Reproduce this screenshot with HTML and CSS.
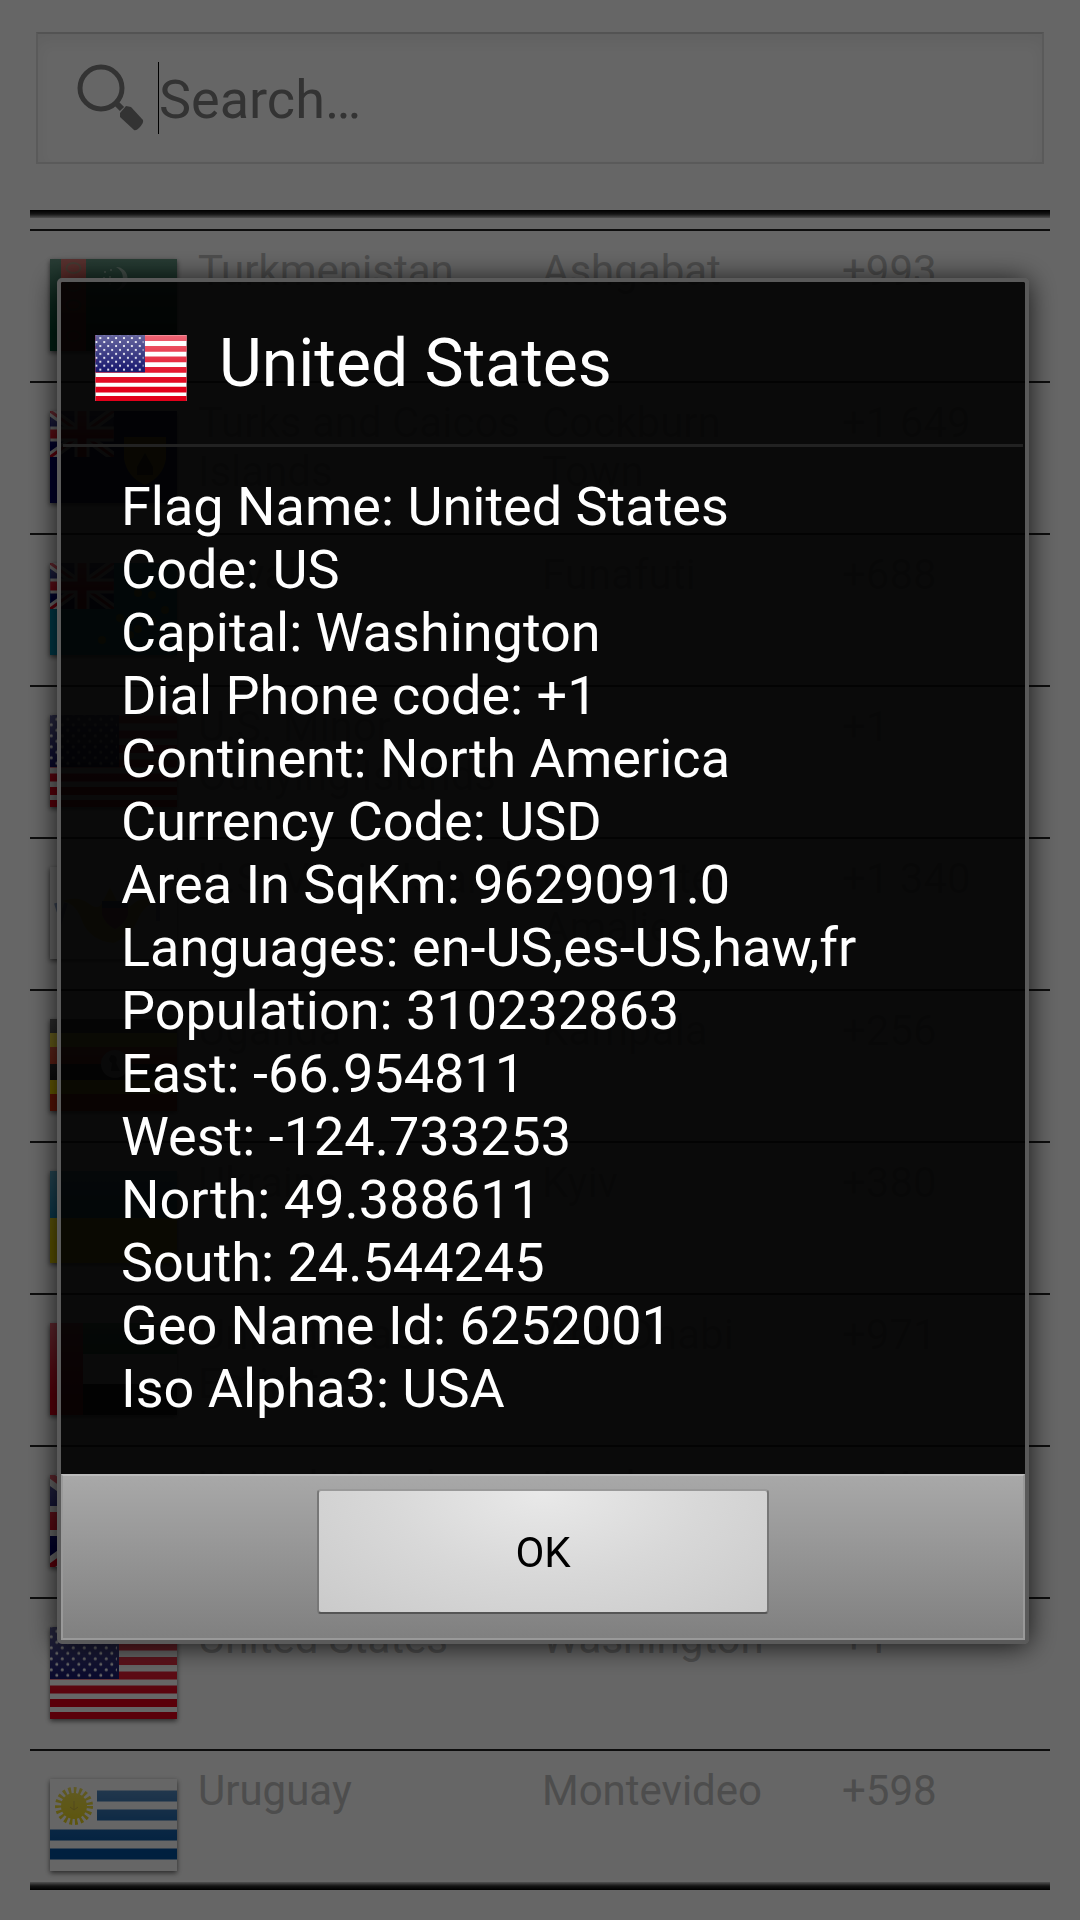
FILE: index.html
```html
<!DOCTYPE html>
<html lang="en">
<head>
    <title>World Flags</title>
    <meta charset="utf-8" />
    <meta name="viewport" content="width=device-width, initial-scale=1">
    <link rel="stylesheet" href="styles.css">
</head>
<body>
    <!-- shared flag drawings -->
    <svg class="defs" width="0" height="0" aria-hidden="true">
        <defs>
            <linearGradient id="gloss" x1="0" y1="0" x2="0" y2="1">
                <stop offset="0" stop-color="#fff" stop-opacity=".4"/>
                <stop offset=".5" stop-color="#fff" stop-opacity=".12"/>
                <stop offset=".8" stop-color="#fff" stop-opacity="0"/>
            </linearGradient>
            <pattern id="stars" x="4" y="1.5" width="11" height="11" patternUnits="userSpaceOnUse">
                <circle cx="2.8" cy="2.8" r="1.5" fill="#fff"/>
                <circle cx="8.3" cy="8.3" r="1.5" fill="#fff"/>
            </pattern>
            <symbol id="us" viewBox="0 0 127 92">
                <rect width="127" height="92" fill="#fff"/>
                <path d="M0 4.5h127M0 19.5h127M0 34h127M0 48.5h127M0 62.5h127M0 76h127M0 89h127" stroke="#e2001a" stroke-width="8"/>
                <rect width="69" height="52" fill="#00005f"/>
                <rect width="67" height="51" fill="url(#stars)"/>
                <rect width="127" height="92" fill="url(#gloss)"/>
            </symbol>
            <symbol id="gb" viewBox="0 0 127 92">
                <rect width="127" height="92" fill="#00006b"/>
                <path d="M0 0L127 92M127 0L0 92" stroke="#fff" stroke-width="18"/>
                <path d="M0 0L127 92M127 0L0 92" stroke="#e2001a" stroke-width="6"/>
                <path d="M63.500 0v92M0 46h127" stroke="#fff" stroke-width="30"/>
                <path d="M63.500 0v92M0 46h127" stroke="#e2001a" stroke-width="18"/>
                <rect width="127" height="92" fill="url(#gloss)"/>
            </symbol>
            <symbol id="tm" viewBox="0 0 127 92">
                <rect width="127" height="92" fill="#004f30"/>
                <rect x="11" width="25" height="92" fill="#c2261d"/>
                <g fill="none" stroke="#7a5030" stroke-width="2">
                    <ellipse cx="23.500" cy="9" rx="7" ry="5"/><ellipse cx="23.500" cy="27" rx="7" ry="5"/>
                    <ellipse cx="23.500" cy="46" rx="7" ry="5"/><ellipse cx="23.500" cy="77" rx="7" ry="5"/>
                </g>
                <path d="M66 8a11 11 0 0 1 0 23a13 13 0 0 0 0-23z" fill="#7fa894"/>
                <g fill="#7fa894"><circle cx="55" cy="13" r="1"/><circle cx="61" cy="11" r="1"/><circle cx="54" cy="19" r="1"/><circle cx="60" cy="18" r="1"/><circle cx="60" cy="25" r="1"/></g>
                <rect width="127" height="92" fill="url(#gloss)"/>
            </symbol>
            <symbol id="tc" viewBox="0 0 127 92">
                <rect width="127" height="92" fill="#00006b"/>
                <use href="#gb" width="64" height="46"/>
                <path d="M74 26h42v22q-3 18-21 26q-18-8-21-26z" fill="#c8a50c"/>
                <path d="M95 42l8 14v8h-16v-8z" fill="#3a2d10"/>
            </symbol>
            <symbol id="tv" viewBox="0 0 127 92">
                <rect width="127" height="92" fill="#008fb3"/>
                <use href="#gb" width="64" height="46"/>
                <g fill="#b5b420"><circle cx="52" cy="77" r="4"/><circle cx="70" cy="55" r="4"/><circle cx="80" cy="72" r="4"/><circle cx="88" cy="66" r="4"/><circle cx="88" cy="30" r="4"/><circle cx="102" cy="58" r="4"/><circle cx="102" cy="32" r="4"/><circle cx="115" cy="47" r="4"/></g>
            </symbol>
            <symbol id="vi" viewBox="0 0 127 92">
                <rect width="127" height="92" fill="#fff"/>
                <path d="M12 34q16-6 26 2q10 8 14 0l8-16l8 16q8 8 16 0q10-8 24-2q-14 4-20 18q-6 16-24 24q-24-2-32-22q-6-18-20-20z" fill="#f2dc70"/>
                <path d="M52 34h26v14q-4 10-13 14q-9-4-13-14z" fill="#d2707a"/>
                <path d="M52 34h26v7h-26z" fill="#4a6a9c"/>
                <path d="M6 36l5 16l5-16M108 32v22" fill="none" stroke="#8fa5cc" stroke-width="4"/>
            </symbol>
            <symbol id="ug" viewBox="0 0 127 92">
                <rect width="127" height="92" fill="#111"/>
                <path d="M0 14h127v14h-127zM0 61h127v14h-127z" fill="#ffe000"/>
                <path d="M0 28h127v17h-127zM0 75h127v17h-127z" fill="#e03010"/>
                <circle cx="65" cy="45" r="14" fill="#ccc"/>
                <path d="M61 36q8 0 5 8l4 8h-9l1-8q-5-2-1-8z" fill="#444"/>
                <rect width="127" height="92" fill="url(#gloss)"/>
            </symbol>
            <symbol id="ua" viewBox="0 0 127 92">
                <rect width="127" height="92" fill="#e8d200"/>
                <rect width="127" height="47" fill="#0080b5"/>
                <rect width="127" height="92" fill="url(#gloss)"/>
            </symbol>
            <symbol id="ae" viewBox="0 0 127 92">
                <rect width="127" height="92" fill="#fff"/>
                <rect width="127" height="31" fill="#007a3d"/>
                <rect y="61" width="127" height="31" fill="#000"/>
                <rect width="33" height="92" fill="#e2001a"/>
                <rect width="127" height="92" fill="url(#gloss)"/>
            </symbol>
            <symbol id="uy" viewBox="0 0 127 92">
                <rect width="127" height="92" fill="#fff"/>
                <path d="M47 17h80M47 36h80M0 56h127M0 75h127" stroke="#00509f" stroke-width="11"/>
                <circle cx="24" cy="27" r="13" fill="#e8d000"/>
                <circle cx="24" cy="27" r="15" fill="none" stroke="#e8d000" stroke-width="8" stroke-dasharray="2.500 2.500"/>
                <path d="M24 22v8M20 28l4 3 4-3" fill="none" stroke="#c0a010"/>
                <rect width="127" height="92" fill="url(#gloss)"/>
            </symbol>
        </defs>
    </svg>

    <div class="page">
        <label class="search">
            <svg class="search-icon" viewBox="0 0 70 70" aria-hidden="true">
                <circle cx="25" cy="25" r="21" fill="none" stroke="#808080" stroke-width="5"/>
                <path d="M40 40l6 6" stroke="#808080" stroke-width="6"/>
                <path d="M44 50l6-7 5 1 12 13q1 3-4 8q-3 3-5 2l-14-13z" fill="#808080"/>
            </svg>
            <span class="caret"></span>
            <input type="text" placeholder="Search…" aria-label="Search">
        </label>

        <div class="shade shade-top"></div>
        <div class="list">
            <table class="countries">
                <colgroup><col class="c-flag"><col class="c-name"><col class="c-capital"><col></colgroup>
                <tr><td><svg class="flag"><use href="#tm"/></svg></td><td>Turkmenistan</td><td>Ashgabat</td><td>+993</td></tr>
                <tr><td><svg class="flag"><use href="#tc"/></svg></td><td>Turks and Caicos Islands</td><td>Cockburn Town</td><td>+1 649</td></tr>
                <tr><td><svg class="flag"><use href="#tv"/></svg></td><td>Tuvalu</td><td>Funafuti</td><td>+688</td></tr>
                <tr><td><svg class="flag"><use href="#us"/></svg></td><td>U.S. Minor Outlying Islands</td><td></td><td>+1</td></tr>
                <tr><td><svg class="flag"><use href="#vi"/></svg></td><td>U.S. Virgin Islands</td><td>Charlotte Amalie</td><td>+1 340</td></tr>
                <tr><td><svg class="flag"><use href="#ug"/></svg></td><td>Uganda</td><td>Kampala</td><td>+256</td></tr>
                <tr><td><svg class="flag"><use href="#ua"/></svg></td><td>Ukraine</td><td>Kyiv</td><td>+380</td></tr>
                <tr><td><svg class="flag"><use href="#ae"/></svg></td><td>United Arab Emirates</td><td>Abu Dhabi</td><td>+971</td></tr>
                <tr><td><svg class="flag"><use href="#gb"/></svg></td><td>United Kingdom</td><td>London</td><td>+44</td></tr>
                <tr><td><svg class="flag"><use href="#us"/></svg></td><td>United States</td><td>Washington</td><td>+1</td></tr>
                <tr><td><svg class="flag"><use href="#uy"/></svg></td><td>Uruguay</td><td>Montevideo</td><td>+598</td></tr>
            </table>
        </div>
        <div class="shade shade-bottom"></div>
    </div>

    <div class="scrim">
        <div class="dialog" role="dialog" aria-modal="true" aria-labelledby="dialogTitle">
            <div class="dialog-head">
                <svg class="flag-small"><use href="#us"/></svg>
                <h1 id="dialogTitle">United States</h1>
            </div>
            <div class="dialog-body">
                <p>Flag Name: United States</p>
                <p>Code: US</p>
                <p>Capital: Washington</p>
                <p>Dial Phone code: +1</p>
                <p>Continent: North America</p>
                <p>Currency Code: USD</p>
                <p>Area In SqKm: 9629091.0</p>
                <p>Languages: en-US,es-US,haw,fr</p>
                <p>Population: 310232863</p>
                <p>East: -66.954811</p>
                <p>West: -124.733253</p>
                <p>North: 49.388611</p>
                <p>South: 24.544245</p>
                <p>Geo Name Id: 6252001</p>
                <p>Iso Alpha3: USA</p>
            </div>
            <div class="dialog-foot">
                <button type="button">OK</button>
            </div>
        </div>
    </div>
</body>
</html>
```
FILE: styles.css
```css
* {box-sizing: border-box;}
body {
    margin: 0;
    background: #fff;
    font-family: Roboto, "Noto Sans", sans-serif;}
.defs {position: absolute;}

.page {
    display: flex;
    flex-direction: column;
    height: 100vh;
    padding: 32px 30px 30px;}

.search {
    display: flex;
    flex: none;
    align-items: center;
    height: 132px;
    margin: 0 6px 46px;
    padding: 0 38px;
    border: 2px solid #e2e2e2;
    border-top-color: #cfcfcf;
    box-shadow: inset 0 8px 16px rgba(0, 0, 0, .06);}
.search-icon {
    width: 70px;
    height: 70px;}
.caret {
    width: 1px;
    height: 72px;
    margin-left: 12px;
    background: #000;}
.search input {
    flex: 1;
    min-width: 0;
    padding: 4px 0 0;
    border: 0;
    outline: 0;
    background: none;
    color: #222;
    font: 54px/64px Roboto, sans-serif;}
.search input::placeholder {
    color: #808080;
    opacity: 1;}

.shade {
    flex: none;
    height: 8px;}
.shade-top {
    margin-bottom: 11px;
    background: linear-gradient(#000, #333 50%, #ccc);}
.shade-bottom {background: linear-gradient(#ccc, #333 50%, #000);}

.list {
    flex: 1;
    min-height: 0;
    overflow: hidden;}
.countries {
    width: 100%;
    table-layout: fixed;
    border-spacing: 0;
    color: #c0c0c0;
    font-size: 42px;
    line-height: 49px;}
.c-flag {width: 168px;}
.c-name {width: 344px;}
.c-capital {width: 300px;}
.countries td {
    height: 152px;
    padding: 15px 0 0;
    border-top: 2px solid #222;
    vertical-align: top;}
.countries td:nth-child(1) {padding: 28px 0 0 20px;}
.countries td:nth-child(3) {padding-right: 60px;}
.flag {
    display: block;
    width: 127px;
    height: 92px;
    box-shadow: 0 2px 5px rgba(0, 0, 0, .6);}

.scrim {
    position: fixed;
    inset: 0;
    display: flex;
    align-items: center;
    padding: 2px 51px 0 57px;
    background: rgba(0, 0, 0, .6);}
.dialog {
    flex: 1;
    border: 4px solid #5a5a5a;
    border-radius: 5px;
    background: rgba(2, 2, 2, .92);
    background-clip: padding-box;
    box-shadow: 0 2px 28px rgba(0, 0, 0, .8);
    color: #fff;}
.dialog-head {
    display: flex;
    align-items: center;
    gap: 32px;
    height: 165px;
    margin: 0 2px;
    padding: 6px 32px 0;
    border-bottom: 3px solid #222;}
.dialog-head h1 {
    margin: 0;
    padding-bottom: 4px;
    font-size: 66px;
    font-weight: 400;
    line-height: 78px;}
.flag-small {
    width: 92px;
    height: 66px;
    margin-top: 3px;}
.dialog-body {
    padding: 28px 60px 54px;
    font-size: 54px;
    line-height: 63px;}
.dialog-body p {margin: 0;}
.dialog-foot {
    display: flex;
    justify-content: center;
    padding: 13px 0 24px;
    border: 2px solid #999;
    border-top-color: #bbb;
    background: linear-gradient(#a8a8a8, #808080);}
.dialog-foot button {
    width: 47%;
    height: 125px;
    padding: 3px 0 0;
    border: 2px solid #777;
    border-top-color: #999;
    border-bottom-color: #555;
    border-radius: 4px;
    background: radial-gradient(ellipse at top, #e9e9e9, #d8d8d8 50%, #cacaca);
    color: #000;
    font: 42px/48px Roboto, sans-serif;}
```
